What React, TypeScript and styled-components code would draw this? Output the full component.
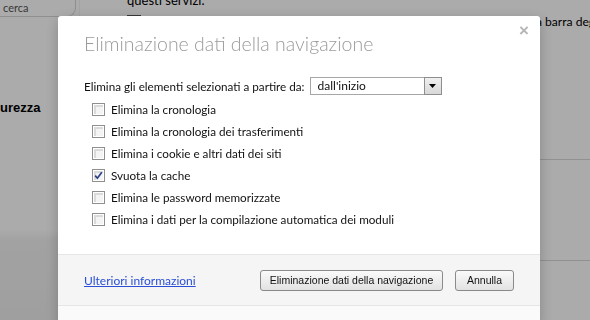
import styled, { createGlobalStyle } from 'styled-components';

const GlobalStyle = createGlobalStyle`
  html, body {
    margin: 0;
    padding: 0;
    width: 590px;
    height: 320px;
    overflow: hidden;
  }
  body {
    font-family: Lato, "Noto Sans", sans-serif;
    background: #ffffff;
    color: #222;
  }
`;

const options = [
  { label: 'Elimina la cronologia', checked: false },
  { label: 'Elimina la cronologia dei trasferimenti', checked: false },
  { label: 'Elimina i cookie e altri dati dei siti', checked: false },
  { label: 'Svuota la cache', checked: true },
  { label: 'Elimina le password memorizzate', checked: false },
  { label: 'Elimina i dati per la compilazione automatica dei moduli', checked: false }
];

function App() {
  return (
    <>
      <GlobalStyle />
      <Page>
        <Sidebar>
          <Search>cerca</Search>
          <SectionName>urezza</SectionName>
        </Sidebar>
        <Main>
          <MainLine>questi servizi.</MainLine>
          <MainRow>
            <BackCheck />
            <span>Utilizza un servizio di suggerimenti per completare le ricerche digitate nella barra degli indirizzi</span>
          </MainRow>
          <Divider $top={130} />
          <Divider $top={100} />
        </Main>
      </Page>

      <Overlay>
        <Dialog>
          <Close>×</Close>
          <Title>Eliminazione dati della navigazione</Title>
          <Body>
            <FromRow>
              <span>Elimina gli elementi selezionati a partire da:</span>
              <Select>
                <SelectValue>dall'inizio</SelectValue>
                <SelectArrow>
                  <svg width="7" height="4" viewBox="0 0 7 4">
                    <path d="M0 0h7L3.5 4z" fill="#000" />
                  </svg>
                </SelectArrow>
              </Select>
            </FromRow>
            <List>
              {options.map((o) => (
                <Option key={o.label}>
                  <Check>
                    {o.checked && (
                      <svg width="9" height="9" viewBox="0 0 9 9">
                        <path
                          d="M1.2 4.6 L3.4 7.2 L7.8 1.2"
                          fill="none"
                          stroke="#2b3f86"
                          strokeWidth="1.7"
                        />
                      </svg>
                    )}
                  </Check>
                  <span>{o.label}</span>
                </Option>
              ))}
            </List>
          </Body>
          <Footer>
            <Link href="#">Ulteriori informazioni</Link>
            <Buttons>
              <Button $width={183}>Eliminazione dati della navigazione</Button>
              <Button $width={59}>Annulla</Button>
            </Buttons>
          </Footer>
          <Bottom />
        </Dialog>
      </Overlay>
    </>
  );
}

const Page = styled.div`
  display: flex;
  width: 590px;
  height: 320px;
`;

const Sidebar = styled.div`
  width: 79px;
  border-right: 1px solid #f4f4f4;
  background: linear-gradient(#ffffff 0, #ffffff 230px, #f2f2f2 240px, #eeeeee 100%);
  display: flex;
  flex-direction: column;
`;

const Search = styled.div`
  width: 72px;
  height: 16px;
  margin-left: -24px;
  border: 1px solid #d6d6d6;
  border-top: none;
  border-radius: 0 0 9px 9px;
  font-size: 11px;
  line-height: 16px;
  color: #555;
  padding-left: 26px;
  box-sizing: content-box;
`;

const SectionName = styled.div`
  margin-top: 83px;
  font-family: "Liberation Sans", Arial, sans-serif;
  font-weight: bold;
  font-size: 13px;
  color: #000;
`;

const Main = styled.div`
  flex: 1;
  padding-left: 47px;
  display: flex;
  flex-direction: column;
  overflow: hidden;
`;

const MainLine = styled.div`
  margin-top: -8px;
  font-size: 13px;
  line-height: 16px;
  color: #000;
`;

const MainRow = styled.div`
  display: flex;
  align-items: center;
  gap: 6px;
  margin-top: 6px;
  font-size: 12.1px;
  white-space: nowrap;
  color: #000;
`;

const BackCheck = styled.div`
  width: 12px;
  height: 12px;
  border: 1px solid #555;
  flex: none;
`;

const Divider = styled.div<{ $top: number }>`
  margin-top: ${(p) => p.$top}px;
  border-top: 1px solid #d8d8d8;
  margin-left: 360px;
`;

const Overlay = styled.div`
  position: fixed;
  inset: 0;
  background: rgba(0, 0, 0, 0.33);
  padding: 16px 0 0 58px;
`;

const Dialog = styled.div`
  position: relative;
  width: 482px;
  background: #ffffff;
  border-radius: 3px 3px 0 0;
  box-shadow: 0 4px 14px rgba(0, 0, 0, 0.22);
`;

const Close = styled.div`
  position: absolute;
  top: 5px;
  right: 11px;
  font-family: "Liberation Sans", Arial, sans-serif;
  font-size: 17px;
  font-weight: bold;
  color: #b5b5b5;
`;

const Title = styled.h1`
  margin: 0;
  padding: 14px 26px 0;
  font-size: 19.5px;
  line-height: 28px;
  font-weight: 300;
  color: #9a9a9a;
`;

const Body = styled.div`
  padding: 18px 26px 24px;
  font-size: 11.7px;
  color: #111;
`;

const FromRow = styled.div`
  display: flex;
  align-items: center;
  gap: 5px;
  height: 20px;
`;

const Select = styled.div`
  width: 130px;
  height: 16px;
  border: 1px solid #a6a6a6;
  display: flex;
  align-items: stretch;
`;

const SelectValue = styled.div`
  flex: 1;
  padding-left: 7px;
  line-height: 16px;
  font-size: 12px;
`;

const SelectArrow = styled.div`
  width: 16px;
  border: 1px solid #8e8e8e;
  margin: -1px -1px -1px 0;
  background: linear-gradient(#f0f0f0, #d8d8d8);
  display: flex;
  align-items: center;
  justify-content: center;
`;

const List = styled.div`
  margin-top: 2px;
  padding-left: 8px;
  display: flex;
  flex-direction: column;
`;

const Option = styled.div`
  display: flex;
  align-items: center;
  gap: 6px;
  height: 22px;
`;

const Check = styled.div`
  width: 11px;
  height: 11px;
  border: 1px solid #8f8f8f;
  background: #f4f4f4;
  box-shadow: inset 0 0 0 1px #ffffff, inset 1px 1px 0 2px #dadada;
  display: flex;
  align-items: center;
  justify-content: center;
`;

const Footer = styled.div`
  height: 50px;
  border-top: 1px solid #e6e6e6;
  border-bottom: 1px solid #e6e6e6;
  background: #f5f5f5;
  padding: 0 26px;
  display: flex;
  align-items: center;
  justify-content: space-between;
`;

const Link = styled.a`
  font-size: 12px;
  color: #2a4fd6;
  text-decoration: underline;
`;

const Buttons = styled.div`
  display: flex;
  gap: 12px;
`;

const Button = styled.button<{ $width: number }>`
  width: ${(p) => p.$width}px;
  height: 21px;
  padding: 0;
  border: 1px solid #8a8a8a;
  border-radius: 3px;
  background: linear-gradient(#fafafa, #e2e2e2);
  font-family: "Liberation Sans", Arial, sans-serif;
  font-size: 10.5px;
  color: #111;
`;

const Bottom = styled.div`
  height: 20px;
  background: #fafafa;
`;

export default App;
